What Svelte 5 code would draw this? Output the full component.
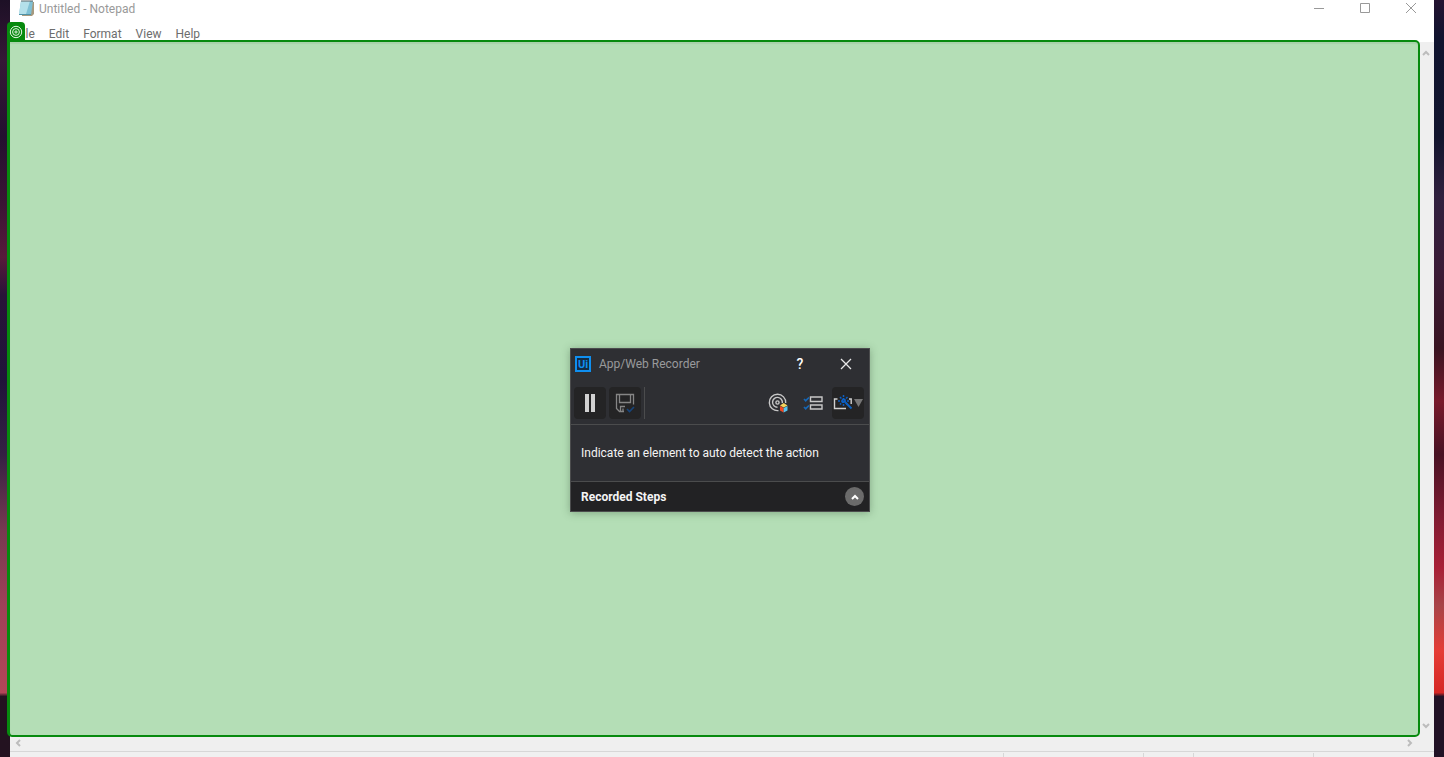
<script>
  const menus = ['File', 'Edit', 'Format', 'View', 'Help'];
  let recording = $state(true);
</script>

<div class="desktop">
  <div class="wallpaper left"></div>

  <section class="notepad" aria-label="Untitled - Notepad">
    <header class="titlebar">
      <svg class="app-icon" width="17" height="18" viewBox="0 0 17 18">
        <path d="M4 2h12v12l-2 2H4z" fill="#a5997f" />
        <path d="M3 1h12l-2 14H1z" fill="#7fc0d4" />
        <path d="M3 1h9L8 14H1z" fill="#b4e0ea" />
        <path d="M1 14h12v1H1z" fill="#4f93a8" />
        <path d="M4 0v2M6 0v2M8 0v2M10 0v2M12 0v2M14 0v2" stroke="#5b6468" />
      </svg>
      <span class="title">Untitled - Notepad</span>
      <div class="caption">
        <button aria-label="Minimize"><svg width="10" height="10"><path d="M0 5.5h10" stroke="#999" /></svg></button>
        <button aria-label="Maximize"><svg width="10" height="10"><path d="M.5.5h9v9h-9z" fill="none" stroke="#999" /></svg></button>
        <button aria-label="Close"><svg width="10" height="10"><path d="M0 0l10 10M10 0L0 10" stroke="#999" /></svg></button>
      </div>
    </header>

    <nav class="menubar">
      {#each menus as menu}
        <button>{menu}</button>
      {/each}
    </nav>

    <main class="editor">
      <textarea aria-label="Text editor" readonly></textarea>
      <div class="vscroll">
        <button aria-label="Scroll up"><svg width="8" height="6"><path d="M1 5l3-3 3 3" /></svg></button>
        <button aria-label="Scroll down"><svg width="8" height="6"><path d="M1 1l3 3 3-3" /></svg></button>
      </div>
      <div class="hscroll">
        <button aria-label="Scroll left"><svg width="6" height="8"><path d="M5 1L2 4l3 3" /></svg></button>
        <button aria-label="Scroll right"><svg width="6" height="8"><path d="M1 1l3 3-3 3" /></svg></button>
      </div>
      <div class="highlight">
        <span class="target">
          <svg width="14" height="14" viewBox="0 0 14 14" fill="none" stroke="#e4f5e4">
            <circle cx="7" cy="7" r="5.7" /><circle cx="7" cy="7" r="3.4" /><circle cx="7" cy="7" r="1.1" />
          </svg>
        </span>
      </div>
    </main>

    <footer class="statusbar"><i></i><i></i><i></i><i></i><i></i></footer>

    <section class="recorder" aria-label="App/Web Recorder">
      <header class="rec-title">
        <svg width="16" height="16" viewBox="0 0 16 16">
          <rect x="1" y="1" width="14" height="14" fill="#142c42" stroke="#0f8ff0" stroke-width="2" />
          <text x="8" y="12" text-anchor="middle" font-size="11" font-weight="700" fill="#0f8ff0">Ui</text>
        </svg>
        <span>App/Web Recorder</span>
        <button class="help" aria-label="Help">?</button>
        <button class="close" aria-label="Close recorder">
          <svg width="12" height="12"><path d="M1 1l10 10M11 1L1 11" stroke="#e8e8e8" stroke-width="1.3" /></svg>
        </button>
      </header>

      <div class="toolbar">
        <button class="tool filled" aria-label="Pause" onclick={() => (recording = !recording)}>
          <svg width="18" height="18"><path d="M4 0h4v18H4zM10 0h4v18h-4z" fill="#d2d2d2" /></svg>
        </button>
        <button class="tool filled" aria-label="Save">
          <svg width="20" height="20" viewBox="0 0 20 20" fill="none" stroke="#858585" stroke-width="1.3">
            <path d="M9 18.500H4.500L1.500 15.500V1.500h17v10M4.500 1.500v8h11v-8M5.500 18.500v-5H10M8 15.500v3" />
            <path d="M12 16l2.500 2.500L19 14" stroke="#17457b" stroke-width="1.6" />
          </svg>
        </button>
        <span class="divider"></span>
        <button class="tool push" aria-label="Computer vision target">
          <svg width="20" height="20" viewBox="0 0 20 20" fill="none" stroke="#c8c8c8" stroke-width="1.4">
            <path d="M10.500 17.600A8.200 8.200 0 1 1 17.700 10M9.500 14.200A4.900 4.900 0 1 1 14.300 10" />
            <circle cx="9.500" cy="9.500" r="1.600" />
            <g stroke="none">
              <path d="M12 13l3.700 2v4.500L12 17.500z" fill="#f04a23" />
              <path d="M15.700 15l3.800-2v4.500l-3.800 2z" fill="#55c4f0" />
              <path d="M12 12.500l3.700-2.500 3.800 2.500-3.800 2z" fill="#f4d35c" />
            </g>
          </svg>
        </button>
        <button class="tool" aria-label="Steps">
          <svg width="20" height="16" viewBox="0 0 20 16" fill="none">
            <path d="M7.500 2h11.500v4.500H7.500zM7.500 10h11.500v4H7.500z" stroke="#c8c8c8" stroke-width="1.400" />
            <path d="M1 4l1.700 1.700L6 2.500M1 12l1.700 1.700L6 10.500" stroke="#1767b5" stroke-width="1.700" />
          </svg>
        </button>
        <button class="tool filled wide" aria-label="Indicate element">
          <svg width="31" height="18" viewBox="0 0 31 18" fill="none">
            <path d="M4.500 5H1.500v9.500H13M16 5h2.200v5" stroke="#d0d0d0" stroke-width="1.400" />
            <path d="M12.500 8.500l6 6" stroke="#0c62c4" stroke-width="2" />
            <path d="M10.500 1v12M5 7h11M7 3l7.500 7.500M14.500 3L7 10.500" stroke="#0b5fc4" stroke-width="1.500" stroke-dasharray="2 1" />
            <path d="M21 5h9l-4.500 8z" fill="#777" />
          </svg>
        </button>
      </div>

      <p class="message">Indicate an element to auto detect the action</p>

      <div class="steps">
        <strong>Recorded Steps</strong>
        <button aria-label="Expand recorded steps">
          <svg width="8" height="6"><path d="M1 5l3-3 3 3" fill="none" stroke="#fff" stroke-width="2" /></svg>
        </button>
      </div>
    </section>
  </section>

  <div class="wallpaper right"></div>
</div>

<style>
  :global(body) { margin: 0; overflow: hidden; }
  * { box-sizing: border-box; }
  .desktop {
    display: grid;
    grid-template-columns: 10px 1fr 10px;
    height: 100vh;
    font: 12px/16px Roboto, "Open Sans", sans-serif;
  }
  button { padding: 0; border: 0; background: none; font: inherit; color: inherit; }
  svg { display: block; }
  .wallpaper.left {
    background: linear-gradient(#1d1026 0%, #351836 8%, #241030 18%, #3b1435 27%, #581a3b 34%, #291239 39%, #20143a 50%, #352044 60%, #773951 70%, #9f4058 80%, #b24658 91.5%, #231220 92%, #231220 100%);
  }
  .wallpaper.right {
    background: linear-gradient(#241331 0%, #11142f 5%, #12152d 18%, #30203e 26%, #3b1b36 36%, #391421 46%, #781a2b 53%, #481223 60%, #7e1b31 68%, #a82036 75%, #a84448 80%, #e53c35 86%, #d52724 91.5%, #211225 92%, #211225 100%);
  }
  .notepad {
    position: relative;
    display: grid;
    grid-template-rows: 24px 18px 1fr 6px;
    min-width: 0;
    background: #fff;
  }
  .titlebar { display: flex; align-items: flex-start; gap: 4px; padding-left: 8px; color: #999; }
  .title { flex: 1; padding-top: 1px; }
  .caption { display: flex; }
  .caption button { display: grid; place-items: center; width: 46px; height: 16px; }
  .menubar { display: flex; gap: 14px; padding: 2px 6px 0; color: #6d6d6d; align-items: center; }
  .editor {
    position: relative;
    display: grid;
    grid-template: 1fr 16px / 1fr 16px;
    background: #efefef;
  }
  textarea { width: 100%; height: 100%; border: 0; padding: 0; resize: none; outline: 0; background: #fff; }
  .vscroll, .hscroll { display: flex; justify-content: space-between; }
  .vscroll { flex-direction: column; align-items: center; padding: 8px 0 6px; }
  .hscroll { align-items: center; padding: 0 5px; }
  .vscroll path, .hscroll path { fill: none; stroke: #bcbcbc; stroke-width: 2; }
  .highlight {
    position: absolute;
    inset: -2px 14px 14px -3px;
    border: 2px solid #078a0e;
    border-left-width: 3px;
    border-radius: 5px;
    border-top-left-radius: 0;
    background: #b4deb6;
    box-shadow: inset 0 2px 1px #a9d2ab;
  }
  .target {
    position: absolute;
    left: -3px;
    top: -20px;
    display: grid;
    place-items: center;
    width: 18px;
    height: 19px;
    border-radius: 4px 4px 0 0;
    background: #078a0e;
  }
  .statusbar {
    display: grid;
    grid-template-columns: 1fr 140px 50px 120px 121px;
    padding-top: 1px;
    border-top: 1px solid #d7d7d7;
    background: #f0f0f0;
  }
  .statusbar i + i { border-left: 1px solid #d7d7d7; }

  .recorder {
    position: absolute;
    left: calc(50% - 152px);
    top: 348px;
    width: 300px;
    border: 1px solid #4b4c4d;
    background: #2e2f33;
    color: #f4f4f4;
    box-shadow: 0 1px 8px #38573a66;
  }
  .rec-title { display: flex; align-items: center; height: 30px; padding-left: 4px; color: #999a9c; }
  .rec-title span { flex: 1; padding-left: 8px; }
  .rec-title button { display: grid; place-items: center; width: 46px; height: 30px; color: #fff; }
  .rec-title .help { font-size: 14px; font-weight: 500; }
  .toolbar {
    display: flex;
    align-items: center;
    gap: 3px;
    height: 46px;
    padding: 3px 5px 0 3px;
    border-bottom: 1px solid #4b4c4d;
  }
  .tool { display: grid; place-items: center; width: 32px; height: 32px; border-radius: 4px; }
  .filled { background: #242425; }
  .push { margin-left: auto; }
  .divider { width: 1px; height: 32px; background: #4b4c4d; }
  .message { display: flex; align-items: center; height: 56px; margin: 0; padding: 0 10px; }
  .steps {
    display: flex;
    align-items: center;
    justify-content: space-between;
    height: 30px;
    padding: 0 5px 0 10px;
    border-top: 1px solid #4b4c4d;
    background: #222224;
  }
  .steps button { display: grid; place-items: center; width: 19px; height: 19px; border-radius: 50%; background: #6b6b6b; }
</style>
